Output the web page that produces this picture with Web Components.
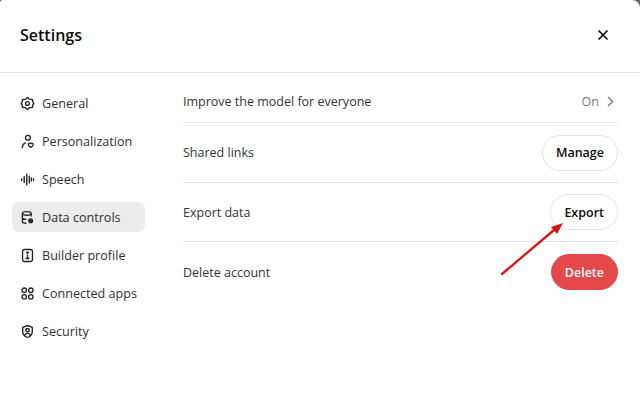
<!DOCTYPE html>
<html>
<head>
<meta charset="utf-8">
<style>
  html, body { margin: 0; width: 640px; height: 416px; overflow: hidden; background: #666; }
  body { font-family: "Open Sans", "Liberation Sans", sans-serif; color: #0d0d0d; }
</style>
</head>
<body>
<settings-dialog>
  <nav-item slot="nav" icon="general">General</nav-item>
  <nav-item slot="nav" icon="person">Personalization</nav-item>
  <nav-item slot="nav" icon="speech">Speech</nav-item>
  <nav-item slot="nav" icon="data" active>Data controls</nav-item>
  <nav-item slot="nav" icon="builder">Builder profile</nav-item>
  <nav-item slot="nav" icon="apps">Connected apps</nav-item>
  <nav-item slot="nav" icon="security">Security</nav-item>

  <setting-row style="--row-height: 43px">Improve the model for everyone<on-link slot="action">On</on-link></setting-row>
  <setting-row style="--row-height: 60px">Shared links<pill-button slot="action">Manage</pill-button></setting-row>
  <setting-row style="--row-height: 59px">Export data<pill-button slot="action">Export</pill-button></setting-row>
  <setting-row style="--row-height: 60px" last>Delete account<pill-button slot="action" danger>Delete</pill-button></setting-row>
</settings-dialog>

<script>
const ICONS = {
  general: '<path d="M10 1.800l2.200 2.300 4.700.9.200 3.200 1.300 1.800-1.300 1.800-.2 3.200-4.700.9-2.200 2.300-2.200-2.300-4.700-.9-.2-3.200L1.600 10l1.300-1.800.2-3.200 4.700-.9z" stroke-linejoin="round"/><circle cx="10" cy="10" r="2.500"/>',
  person: '<circle cx="10.500" cy="5" r="3.200"/><path d="M3 18c.2-3.200 1.600-5.300 4.400-6.200"/><path d="M14.300 17.800c-2-1-3.300-2.200-3.300-3.700 0-1.200 1-1.900 1.900-1.900.6 0 1.100.3 1.400.7.300-.4.800-.7 1.400-.7.900 0 1.900.7 1.900 1.900 0 1.500-1.300 2.700-3.300 3.700z"/>',
  speech: '<path d="M2.300 8.800v2.400M5.600 6v8M9 3v14M12.400 5.500v9M15.200 8v4M18 9v2"/>',
  data: '<ellipse cx="9" cy="4.600" rx="5.800" ry="2.400"/><path d="M3.200 4.600v10.800c0 1.300 2 2.200 4.600 2.300M14.800 4.600v3.400M3.200 10.200c0 1.300 2.300 2.200 4.800 2.300"/><circle cx="14.200" cy="14.400" r="2.500" fill="currentColor"/>',
  builder: '<rect x="3.400" y="2" width="13.200" height="16" rx="2.400"/><path d="M10 9.400v4.400M8 14h4"/><circle cx="10" cy="6.300" r=".9" fill="currentColor"/>',
  apps: '<circle cx="5.600" cy="5.600" r="3"/><circle cx="14.400" cy="5.600" r="3"/><circle cx="5.600" cy="14.400" r="3"/><circle cx="14.400" cy="14.400" r="3"/>',
  security: '<path d="M10 2l6.400 2.400v5.800c0 3.700-2.700 6.200-6.400 7.800-3.700-1.600-6.400-4.100-6.400-7.800V4.400z" stroke-linejoin="round"/><circle cx="10" cy="8.400" r="2.400"/><path d="M6.400 14.800c.8-1.600 2.100-2.400 3.600-2.400s2.800.8 3.600 2.400"/>'
};

class NavItem extends HTMLElement {
  constructor() {
    super();
    const root = this.attachShadow({ mode: 'open' });
    root.innerHTML = `
      <style>
        :host { display: flex; align-items: center; gap: 7px; height: 30px; padding-left: 8px; border-radius: 7px;
          font-size: 12.6px; color: #2f2f2f; }
        :host([active]) { background: #ececec; }
        svg { width: 15px; height: 15px; fill: none; stroke: #222; stroke-width: 1.8; stroke-linecap: round; flex: none; }
      </style>
      <svg viewBox="0 0 20 20">${ICONS[this.getAttribute('icon')]}</svg>
      <slot></slot>`;
  }
}

class SettingRow extends HTMLElement {
  constructor() {
    super();
    const root = this.attachShadow({ mode: 'open' });
    root.innerHTML = `
      <style>
        :host { display: flex; align-items: center; justify-content: space-between; height: var(--row-height); box-sizing: border-box;
          border-bottom: 1px solid #e5e5e5; font-size: 12.5px; color: #333; }
        :host([last]) { border-bottom: 0; }
      </style>
      <slot></slot>
      <slot name="action"></slot>`;
  }
}

class PillButton extends HTMLElement {
  constructor() {
    super();
    const root = this.attachShadow({ mode: 'open' });
    root.innerHTML = `
      <style>
        :host { display: flex; align-items: center; height: 36px; box-sizing: border-box; padding: 0 13px; border: 1px solid #e3e3e3;
          border-radius: 18px; background: #fff; font-size: 12.5px; font-weight: 600; color: #0d0d0d; }
        :host([danger]) { background: #e5484a; border-color: #e5484a; color: #fff; }
      </style>
      <slot></slot>`;
  }
}

class OnLink extends HTMLElement {
  constructor() {
    super();
    const root = this.attachShadow({ mode: 'open' });
    root.innerHTML = `
      <style>
        :host { display: flex; align-items: center; gap: 8px; padding-right: 4px; font-size: 12.5px; color: #777; }
        svg { width: 7px; height: 11px; fill: none; stroke: currentColor; stroke-width: 1.4; }
      </style>
      <slot></slot>
      <svg viewBox="0 0 7 11"><path d="M1 1l4.500 4.500L1 10"/></svg>`;
  }
}

class SettingsDialog extends HTMLElement {
  constructor() {
    super();
    const root = this.attachShadow({ mode: 'open' });
    root.innerHTML = `
      <style>
        :host { display: block; position: relative; width: 640px; height: 416px; background: #fff; border-radius: 3px 8px 0 0; }
        header { display: flex; align-items: center; justify-content: space-between; height: 73px; box-sizing: border-box;
          padding: 0 31px 3px 20px; border-bottom: 1px solid #e5e5e5; }
        h1 { margin: 0; font-size: 16px; font-weight: 600; color: #0d0d0d; }
        .close { width: 12px; height: 12px; fill: none; stroke: #0d0d0d; stroke-width: 1.7; }
        .body { display: flex; padding-top: 7px; }
        nav { display: flex; flex-direction: column; gap: 8px; width: 133px; margin: 8px 0 0 12px; flex: none; }
        main { width: 435px; margin-left: 38px; }
        .arrow { position: absolute; left: 495px; top: 218px; width: 70px; height: 60px; }
      </style>
      <header>
        <h1>Settings</h1>
        <svg class="close" viewBox="0 0 12 12"><path d="M1.500 1.500l9 9M10.500 1.500l-9 9"/></svg>
      </header>
      <div class="body">
        <nav><slot name="nav"></slot></nav>
        <main><slot></slot></main>
      </div>
      <svg class="arrow" viewBox="0 0 70 60">
        <path d="M7 56L59 12" stroke="#dc1414" stroke-width="2.300" stroke-linecap="round"/>
        <path d="M68 5L56 9l6 7z" fill="#dc1414"/>
      </svg>`;
  }
}

customElements.define('nav-item', NavItem);
customElements.define('setting-row', SettingRow);
customElements.define('pill-button', PillButton);
customElements.define('on-link', OnLink);
customElements.define('settings-dialog', SettingsDialog);
</script>
</body>
</html>
